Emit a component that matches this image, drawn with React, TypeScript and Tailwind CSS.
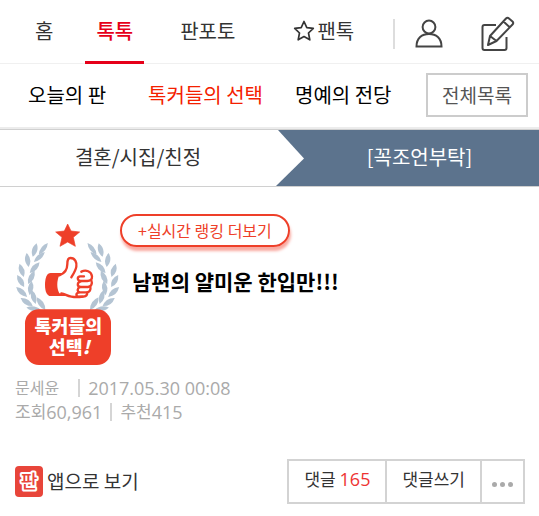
import React from 'react';

const leaves = [
    [130, 146, 22, 7, -52],
    [104, 150, 21, 8, -74],
    [118, 171, 22, 7, -42],
    [83, 180, 21, 8, 82],
    [104, 203, 22, 8, -48],
    [65, 211, 21, 8, 72],
    [94, 232, 22, 8, -64],
    [62, 243, 21, 8, 60],
    [92, 264, 22, 8, -82],
    [65, 276, 22, 8, 42],
    [101, 291, 22, 8, 74],
    [80, 306, 22, 8, 34],
    [123, 311, 23, 8, 56],
    [101, 326, 22, 7, 10],
];

const Leaves: React.FC = () => (
    <g fill="#b4c4d3">
        {leaves.map(([x, y, rx, ry, a]) => (
            <path
                key={`${x}-${y}`}
                transform={`translate(${x} ${y}) rotate(${a})`}
                d={`M${-rx} 0 Q0 ${-ry * 2} ${rx} 0 Q0 ${ry * 2} ${-rx} 0Z`}
            />
        ))}
    </g>
);

const Badge: React.FC = () => (
    <svg viewBox="45 66 315 432" className="w-[105px] h-36 shrink-0">
        <path d="M203 72l10 21 26 3-19 16 6 27-23-13-23 13 6-27-19-16 26-3z" fill="#ee3f29" stroke="#ee3f29" strokeWidth="2" strokeLinejoin="round" />
        <Leaves />
        <g transform="translate(406 0) scale(-1 1)">
            <Leaves />
        </g>
        <path d="M190 219h-38c-11 0-17 14-17 35s6 34 17 34h44z" fill="#ee3f29" />
        <path d="M178 226c14-5 24-18 24-34 0-12 2-18 9-18 15 0 20 14 18 26-2 12-8 20-14 28h50l-5 60c-18 5-40 5-52 2-12-3-18-8-30-10-8-14-8-38 0-54z" fill="#fff" />
        <g fill="none" stroke="#ee3f29" strokeWidth="7" strokeLinecap="round" strokeLinejoin="round">
            <path d="M178 226c14-5 24-18 24-34 0-12 2-18 9-18 15 0 20 14 18 26-2 12-9 22-15 32" />
            <path d="M184 280c12 2 16 8 30 10 10 2 22 2 34 0" />
            <path d="M244 215c14-7 30-1 32 14 1 10-6 14-14 14h-20c-10 0-12-12-2-14h12" />
            <path d="M274 241c4 10 0 18-10 20h-24c-9-2-9-14 2-17" />
            <path d="M271 260c2 10-2 16-10 17h-22c-8-2-8-12 1-16" />
            <path d="M262 277c0 9-6 13-14 13h-13c-8-1-8-11 2-13" />
        </g>
        <rect x="75" y="328" width="258" height="167" rx="42" fill="#ee3f29" />
        <text fill="#fff" fontFamily="'Noto Sans CJK KR', sans-serif" fontSize="55" fontWeight="900" textAnchor="middle">
            <tspan x="205" y="398">톡커들의</tspan>
            <tspan x="208" y="463">선택</tspan>
            <tspan fontStyle="italic">!</tspan>
        </text>
    </svg>
);

const AppLogo: React.FC = () => (
    <svg viewBox="0 0 28 31" className="w-7 h-[31px]">
        <rect width="28" height="31" rx="4" fill="#e8453a" />
        <text x="14" y="22" fontSize="18" fontWeight="500" textAnchor="middle" fill="#e8453a" stroke="#fff" strokeWidth="4" strokeLinejoin="round" paintOrder="stroke" fontFamily="'Noto Sans CJK KR', sans-serif">판</text>
    </svg>
);

const Header: React.FC = () => (
    <header>
        <nav className="flex items-center h-16 pl-[35px] pr-6 pb-px border-b border-[#f0f0f0] text-xl text-[#333]">
            <a href="#home">홈</a>
            <a href="#talk" className="flex items-center h-16 -mb-[2px] ml-8 px-[11px] border-b-3 border-[#e60019] font-medium text-[#e60019]">톡톡</a>
            <a href="#photo" className="ml-9">판포토</a>
            <a href="#fan" className="flex items-center ml-[58px]">
                <svg viewBox="0 0 22 22" className="w-[22px] h-[22px] mr-[2px]" fill="none" stroke="#333" strokeWidth="1.7" strokeLinejoin="round">
                    <path d="M11 1.5l2.8 6.1 6.5.7-4.8 4.7 1.3 6.8-5.8-3.3-5.8 3.3 1.3-6.8L1.7 8.3l6.5-.7z" />
                </svg>
                팬톡
            </a>
            <div className="flex items-center ml-auto pt-[5px]">
                <span className="w-[2px] h-[30px] mr-5 bg-[#ddd]"></span>
                <button aria-label="내 정보" className="mr-[38px]">
                    <svg viewBox="0 0 28 30" className="w-7 h-[30px]" fill="none" stroke="#444" strokeWidth="2">
                        <circle cx="14" cy="8" r="6.4" />
                        <path d="M1.5 27.5C1.5 19 7 15 14 15s12.500 4 12.500 12.500z" />
                    </svg>
                </button>
                <button aria-label="글쓰기">
                    <svg viewBox="0 0 34 36" className="w-[34px] h-9" fill="none" stroke="#444" strokeWidth="2" strokeLinejoin="round">
                        <path d="M15 9H3.500Q1.500 9 1.500 11v21q0 2 2 2h20q2 0 2-2V21" />
                        <path d="M7 29l2-9L25 2.500q1.500-1.500 3 0l3.500 3q1.500 1.500 0 3L15.500 25zM9 20l6.500 5M22.500 5.500l6.500 6" />
                    </svg>
                </button>
            </div>
        </nav>
        <nav className="flex items-center h-[65px] pl-7 pr-[11px] pb-px border-b-2 border-[#ececec] text-xl text-black">
            <a href="#today">오늘의 판</a>
            <a href="#choice" className="ml-[42px] text-[#f42000]">톡커들의 선택</a>
            <a href="#fame" className="ml-8">명예의 전당</a>
            <button className="ml-auto h-11 px-[14px] border-2 border-[#ccc] text-[19px] text-[#555]">전체목록</button>
        </nav>
    </header>
);

const Category: React.FC = () => (
    <div className="grid grid-cols-[276fr_263fr] h-[58px] border-y border-[#d0d0d0] text-xl">
        <a href="#category" className="flex items-center justify-center pb-[2px] text-[#333]">결혼/시집/친정</a>
        <a href="#series" className="relative flex items-center justify-center pl-6 pb-[2px] bg-[#5c738d] text-white">
            <svg viewBox="0 0 28 56" className="absolute left-0 top-0 w-7 h-14" fill="#fff">
                <path d="M0 0h2l26 28.500L0 56z" />
            </svg>
            [꼭조언부탁]
        </a>
    </div>
);

export default function App() {
    return (
        <div className="bg-white font-['Noto_Sans_CJK_KR',sans-serif]">
            <Header />
            <Category />
            <main className="pl-[15px] pr-[14px]">
                <div className="flex pt-[27px]">
                    <div className="pt-2">
                        <Badge />
                    </div>
                    <div>
                        <a href="#ranking" className="inline-flex items-center h-[33px] px-4 pb-[2px] border-2 border-[#ee3f29] rounded-full text-base text-[#ee3f29] shadow-[1px_4px_3px_#f9a9a0]">
                            +실시간 랭킹 더보기
                        </a>
                        <h1 className="mt-[18px] ml-3 text-[21px] leading-8 font-bold text-black">남편의 얄미운 한입만!!!</h1>
                    </div>
                </div>
                <div className="mt-[10px] font-['Open_Sans','Noto_Sans_CJK_KR',sans-serif] text-lg leading-6 text-[#aaa]">
                    <p className="flex items-center">
                        <span className="text-base">문세윤</span>
                        <span className="w-[2px] h-[18px] ml-[19px] mr-2 bg-[#d5d5d5]"></span>
                        2017.05.30 00:08
                    </p>
                    <p className="flex items-center">
                        <span className="text-[17px]">조회</span>60,961
                        <span className="w-[2px] h-[18px] mx-2 bg-[#d5d5d5]"></span>
                        <span className="text-[17px]">추천</span>415
                    </p>
                </div>
                <div className="flex items-center justify-between mt-[35px]">
                    <a href="#app" className="flex items-center gap-1 text-[19px] text-[#333]">
                        <AppLogo />
                        앱으로 보기
                    </a>
                    <div className="flex h-[45px] border-2 border-[#d3d3d3] divide-x-2 divide-[#d3d3d3] text-[17px] text-[#333]">
                        <button className="px-[15px] pb-[5px]">
                            댓글 <span className="font-['Open_Sans',sans-serif] text-lg text-[#ee3333]">165</span>
                        </button>
                        <button className="px-[15px] pb-[5px]">댓글쓰기</button>
                        <button aria-label="더보기" className="flex items-center gap-[3px] px-[10px] pt-[6px]">
                            <span className="size-[5px] rounded-full bg-[#aaa]"></span>
                            <span className="size-[5px] rounded-full bg-[#aaa]"></span>
                            <span className="size-[5px] rounded-full bg-[#aaa]"></span>
                        </button>
                    </div>
                </div>
            </main>
        </div>
    );
}
